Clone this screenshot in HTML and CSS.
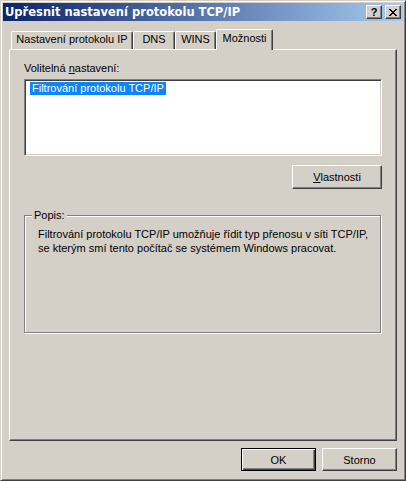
FILE: index.html
```html
<!DOCTYPE html>
<html lang="cs">
<head>
  <meta charset="UTF-8">
  <title>Upřesnit nastavení protokolu TCP/IP</title>
  <link rel="stylesheet" href="styles.css">
</head>
<body>
  <div class="window">
    <!-- záhlaví okna -->
    <div class="titlebar">
      <span class="title">Upřesnit nastavení protokolu TCP/IP</span>
      <div class="title-buttons">
        <button class="caption-btn help-btn">?</button>
        <button class="caption-btn close-btn">
          <svg width="8" height="7" viewBox="0 0 8 7" shape-rendering="crispEdges">
            <path d="M0 0h2v1h1v1h2v-1h1v-1h2v1h-1v1h-1v1h-1v1h1v1h1v1h1v1h-2v-1h-1v-1h-2v1h-1v1h-2v-1h1v-1h1v-1h1v-1h-1v-1h-1v-1h-1z" fill="#000"/>
          </svg>
        </button>
      </div>
    </div>

    <div class="dialog-body">
      <!-- záložky -->
      <div class="tabs">
        <div class="tab tab-ip">Nastavení protokolu IP</div>
        <div class="tab tab-dns">DNS</div>
        <div class="tab tab-wins">WINS</div>
        <div class="tab tab-options active">Možnosti</div>
      </div>

      <div class="tab-panel">
        <div class="field-label">Volitelná <u>n</u>astavení:</div>
        <div class="listbox">
          <div class="list-item selected">Filtrování protokolu TCP/IP</div>
        </div>

        <div class="panel-actions">
          <button class="btn btn-wide"><u>V</u>lastnosti</button>
        </div>

        <fieldset class="groupbox">
          <legend>Popis:</legend>
          <p class="description">Filtrování protokolu TCP/IP umožňuje řídit typ přenosu v síti TCP/IP, se kterým smí tento počítač se systémem Windows pracovat.</p>
        </fieldset>
      </div>

      <!-- tlačítka dialogu -->
      <div class="dialog-buttons">
        <button class="btn btn-default">OK</button>
        <button class="btn">Storno</button>
      </div>
    </div>
  </div>
</body>
</html>
```

FILE: styles.css
```css
/* základ */
* {
  box-sizing: border-box;
  margin: 0;
  padding: 0;
}

body {
  font-family: 'Liberation Sans', Arial, sans-serif;
  font-size: 11px;
  line-height: 13px;
  color: #000;
  background-color: #d4d0c8;
}

/* okno */
.window {
  width: 406px;
  height: 481px;
  background-color: #d4d0c8;
  border: 1px solid;
  border-color: #d4d0c8 #404040 #404040 #d4d0c8;
  box-shadow: inset 1px 1px 0 #fff, inset -1px -1px 0 #808080;
  padding: 2px 2px 1px 2px;
}

.titlebar {
  height: 18px;
  display: flex;
  align-items: center;
  justify-content: space-between;
  padding: 0 2px 0 2px;
  background: linear-gradient(to right, #0a246a, #a6caf0);
}

.title {
  color: #fff;
  font-family: 'DejaVu Sans', Verdana, sans-serif;
  font-weight: bold;
  font-size: 11.5px;
}

.title-buttons {
  display: flex;
  gap: 2px;
}

.caption-btn {
  width: 16px;
  height: 14px;
  display: flex;
  align-items: center;
  justify-content: center;
  background-color: #d4d0c8;
  border: 1px solid;
  border-color: #fff #404040 #404040 #fff;
  box-shadow: inset -1px -1px 0 #808080;
  font-family: 'Liberation Sans', Arial, sans-serif;
  font-weight: bold;
  font-size: 11px;
  line-height: 12px;
  color: #000;
}

.help-btn {
  margin-right: 1px;
}

/* tělo dialogu */
.dialog-body {
  padding: 8px 6px 0 6px;
}

.tabs {
  display: flex;
  align-items: flex-end;
  height: 20px;
  padding-left: 2px;
  position: relative;
  z-index: 1;
}

.tab {
  height: 18px;
  line-height: 15px;
  text-align: center;
  background-color: #d4d0c8;
  border-top: 1px solid #fff;
  border-left: 1px solid #fff;
  border-right: 1px solid #404040;
  box-shadow: inset -1px 0 0 #808080;
  border-radius: 2px 2px 0 0;
}

.tab-ip { width: 122px; }
.tab-dns { width: 42px; }
.tab-wins { width: 41px; }
.tab-options { width: 57px; }

.tab.active {
  height: 21px;
  line-height: 17px;
  margin-bottom: -1px;
}

.tab-panel {
  height: 392px;
  border: 1px solid;
  border-color: #fff #404040 #404040 #fff;
  box-shadow: inset -1px -1px 0 #808080;
  padding: 12px 14px 0 14px;
}

.field-label {
  margin-bottom: 4px;
}

.listbox {
  height: 77px;
  background-color: #fff;
  border: 1px solid;
  border-color: #808080 #fff #fff #808080;
  box-shadow: inset 1px 1px 0 #404040, inset -1px -1px 0 #d4d0c8;
  padding: 2px 0 0 5px;
}

.list-item {
  display: inline-block;
  height: 13px;
  padding: 0 2px;
}

.list-item.selected {
  background-color: #0a84ff;
  color: #fff;
}

.panel-actions {
  display: flex;
  justify-content: flex-end;
  margin-top: 9px;
}

/* tlačítka */
.btn {
  width: 75px;
  height: 23px;
  background-color: #d4d0c8;
  border: 1px solid;
  border-color: #fff #404040 #404040 #fff;
  box-shadow: inset -1px -1px 0 #808080;
  font-family: 'Liberation Sans', Arial, sans-serif;
  font-size: 11px;
  font-weight: normal;
  color: #000;
}

.btn-wide {
  width: 90px;
  height: 24px;
}

.btn-default {
  border: 1px solid #000;
  box-shadow: inset 1px 1px 0 #fff, inset -1px -1px 0 #404040, inset -2px -2px 0 #808080;
}

/* skupina Popis */
.groupbox {
  margin-top: 20px;
  margin-right: 1px;
  height: 124px;
  border: 1px solid #808080;
  box-shadow: inset 1px 1px 0 #fff, 1px 1px 0 #fff;
  padding: 5px 12px 0 13px;
}

.groupbox legend {
  margin-left: -6px;
  padding: 0 2px;
  background-color: #d4d0c8;
  line-height: 13px;
}

.description {
  line-height: 14px;
}

.dialog-buttons {
  display: flex;
  justify-content: flex-end;
  gap: 6px;
  margin-top: 7px;
}
```
